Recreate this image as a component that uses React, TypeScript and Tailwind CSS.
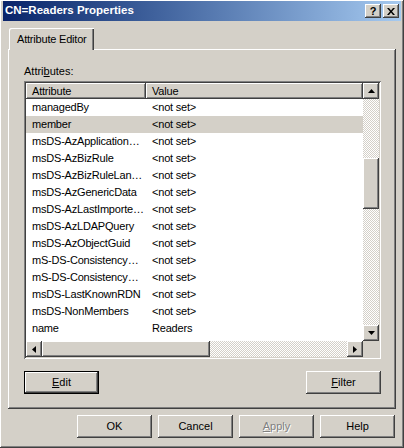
import type { ReactNode } from 'react'

// classic 3D bevels
const raised = 'shadow-[inset_-1px_-1px_#404040,inset_1px_1px_#ffffff,inset_-2px_-2px_#808080,inset_2px_2px_#d4d0c8]'
const sunken = 'shadow-[inset_1px_1px_#808080,inset_-1px_-1px_#ffffff,inset_2px_2px_#404040,inset_-2px_-2px_#d4d0c8]'
const checker = 'bg-[repeating-conic-gradient(#ffffff_0_25%,#d4d0c8_0_50%)] bg-[length:2px_2px]'

const rows: [string, string][] = [
    ['managedBy', '<not set>'],
    ['member', '<not set>'],
    ['msDS-AzApplicationData', '<not set>'],
    ['msDS-AzBizRule', '<not set>'],
    ['msDS-AzBizRuleLanguage', '<not set>'],
    ['msDS-AzGenericData', '<not set>'],
    ['msDS-AzLastImportedBizRulePath', '<not set>'],
    ['msDS-AzLDAPQuery', '<not set>'],
    ['msDS-AzObjectGuid', '<not set>'],
    ['mS-DS-ConsistencyChildCount', '<not set>'],
    ['mS-DS-ConsistencyGuid', '<not set>'],
    ['msDS-LastKnownRDN', '<not set>'],
    ['msDS-NonMembers', '<not set>'],
    ['name', 'Readers'],
    ['objectCategory', 'CN=Group,CN=Schema,CN=Configuration,DC=corp,DC=com'],
]

function Arrow({ dir }: { dir: 'up' | 'down' | 'left' | 'right' }) {
    const pts = {
        up: '3.5,0 7,4 0,4',
        down: '0,0 7,0 3.5,4',
        left: '4,0 4,7 0,3.5',
        right: '0,0 4,3.5 0,7',
    }[dir]
    const vertical = dir === 'up' || dir === 'down'
    return (
        <div className={`w-[16px] h-[16px] bg-[#d4d0c8] flex items-center justify-center shrink-0 ${raised}`}>
            <svg width={vertical ? 7 : 4} height={vertical ? 4 : 7} viewBox={vertical ? '0 0 7 4' : '0 0 4 7'}>
                <polygon points={pts} fill="#000" />
            </svg>
        </div>
    )
}

function Button({ children, isDefault, disabled }: { children: ReactNode; isDefault?: boolean; disabled?: boolean }) {
    return (
        <div
            className={`w-[75px] h-[23px] bg-[#d4d0c8] flex items-center justify-center text-[11px] ${
                isDefault
                    ? 'shadow-[inset_0_0_0_1px_#000,inset_-2px_-2px_#404040,inset_2px_2px_#ffffff,inset_-3px_-3px_#808080]'
                    : raised
            } ${disabled ? 'text-[#808080] [text-shadow:1px_1px_#ffffff]' : 'text-black'}`}
        >
            {children}
        </div>
    )
}

export default function App() {
    return (
        <div
            className={`w-[404px] h-[448px] bg-[#d4d0c8] pt-[1px] px-[3px] flex flex-col font-['Liberation_Sans',Arial,sans-serif] text-black ${raised}`}
        >
            {/* Title bar */}
            <div className="h-[20px] bg-gradient-to-r from-[#0a246a] to-[#a6caf0] flex items-center pl-[2px] pr-[2px]">
                <span className="text-white font-bold text-[11.5px] leading-none">CN=Readers Properties</span>
                <div className="ml-auto flex gap-[2px]">
                    <div className={`w-[16px] h-[14px] bg-[#d4d0c8] flex items-center justify-center text-[11px] font-bold leading-none ${raised}`}>
                        ?
                    </div>
                    <div className={`w-[16px] h-[14px] bg-[#d4d0c8] flex items-center justify-center ${raised}`}>
                        <svg width="8" height="7" viewBox="0 0 8 7">
                            <path d="M0 0h2l2 2.5L6 0h2L5 3.5 8 7H6L4 4.5 2 7H0l3-3.5z" fill="#000" />
                        </svg>
                    </div>
                </div>
            </div>

            {/* Tab strip */}
            <div className="mt-[7px] h-[21px] pl-[6px] flex">
                <div className="relative z-10 h-[22px] w-[85px] bg-[#d4d0c8] pl-[8px] flex items-center text-[11px] tracking-[-0.2px] rounded-tl-[2px] shadow-[inset_1px_1px_#ffffff,inset_-1px_0_#404040,inset_-2px_0_#808080]">
                    Attribute Editor
                </div>
            </div>

            {/* Tab page */}
            <div className={`ml-[5px] w-[388px] h-[360px] pt-[16px] px-[16px] flex flex-col ${raised}`}>
                <div className="text-[11px] leading-[13px]">
                    Attri<span className="underline">b</span>utes:
                </div>

                {/* List view */}
                <div className={`mt-[3px] w-[357px] h-[278px] p-[2px] bg-white ${sunken}`}>
                    <div className="flex h-full">
                        <div className="flex flex-col w-[337px] h-full">
                            <div className="flex-1 overflow-hidden text-[11px] tracking-[-0.2px]">
                                <div className="flex h-[16px]">
                                    <div className={`w-[120px] bg-[#d4d0c8] pl-[6px] flex items-center ${raised}`}>Attribute</div>
                                    <div className={`flex-1 bg-[#d4d0c8] pl-[6px] flex items-center ${raised}`}>Value</div>
                                </div>
                                {rows.map(([name, value]) => (
                                    <div
                                        key={name}
                                        className={`flex h-[17px] items-center ${name === 'member' ? 'bg-[#d4d0c8]' : ''}`}
                                    >
                                        <div className="w-[120px] pl-[6px] pr-[1px] truncate">{name}</div>
                                        <div className="pl-[6px] whitespace-nowrap">{value}</div>
                                    </div>
                                ))}
                            </div>

                            {/* Horizontal scroll bar */}
                            <div className={`h-[16px] flex ${checker}`}>
                                <Arrow dir="left" />
                                <div className={`w-[168px] h-[16px] bg-[#d4d0c8] ${raised}`} />
                                <div className="flex-1" />
                                <Arrow dir="right" />
                            </div>
                        </div>

                        {/* Vertical scroll bar */}
                        <div className="w-[16px] flex flex-col">
                            <div className={`flex-1 flex flex-col ${checker}`}>
                                <Arrow dir="up" />
                                <div className="h-[59px]" />
                                <div className={`h-[51px] bg-[#d4d0c8] ${raised}`} />
                                <div className="flex-1" />
                                <Arrow dir="down" />
                            </div>
                            <div className="h-[16px] bg-[#d4d0c8]" />
                        </div>
                    </div>
                </div>

                <div className="mt-[12px] w-[357px] flex justify-between">
                    <Button isDefault>
                        <span className="underline">E</span>dit
                    </Button>
                    <Button>
                        <span className="underline">F</span>ilter
                    </Button>
                </div>
            </div>

            {/* Dialog buttons */}
            <div className="mt-[6px] flex justify-end gap-[6px] pr-[6px]">
                <Button>OK</Button>
                <Button>Cancel</Button>
                <Button disabled>
                    <span className="underline">A</span>pply
                </Button>
                <Button>Help</Button>
            </div>
        </div>
    )
}
